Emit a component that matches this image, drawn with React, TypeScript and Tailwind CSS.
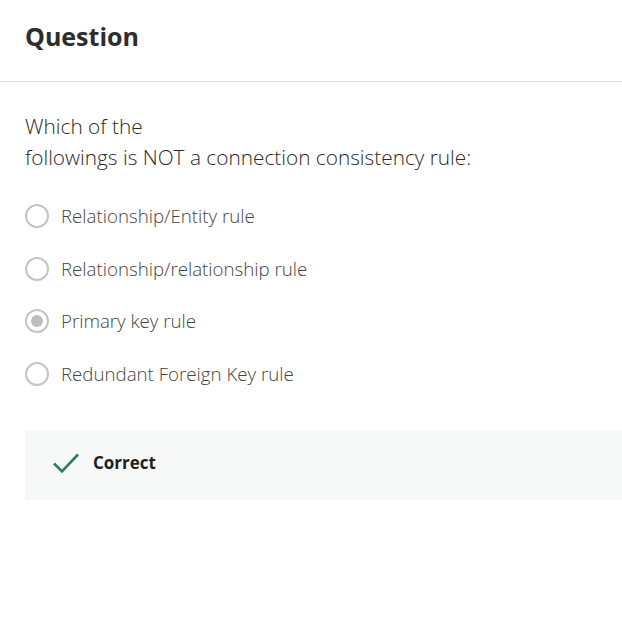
const options = [
	'Relationship/Entity rule',
	'Relationship/relationship rule',
	'Primary key rule',
	'Redundant Foreign Key rule',
];

function Radio({ checked }: { checked?: boolean }) {
	return (
		<span className="flex h-[24px] w-[24px] shrink-0 items-center justify-center rounded-full border-2 border-[#c4c4c4] bg-white">
			{checked && <span className="h-[12px] w-[12px] rounded-full bg-[#bdbdbd]" />}
		</span>
	);
}

export default function App() {
	return (
		<div className="min-h-[634px] w-[622px] overflow-hidden bg-white font-['Open_Sans',sans-serif] text-[#333]">
			<div className="flex h-[82px] items-center border-b border-[#dedede] px-[25px] pb-[8px]">
				<h1 className="text-[25px] font-bold text-[#2d2d2d]">Question</h1>
			</div>

			<div className="pl-[25px] pt-[29px]">
				<p className="text-[20.8px] font-light leading-[31px] text-[#2a2a2a]">
					Which of the
					<br />
					followings is NOT a connection consistency rule:
				</p>

				<div className="mt-[17px] flex flex-col">
					{options.map((opt, i) => (
						<label key={opt} className="flex h-[52.5px] items-center gap-[12px]">
							<Radio checked={i === 2} />
							<span className="text-[18.7px] font-light text-[#444]">{opt}</span>
						</label>
					))}
				</div>

				<div className="mt-[31px] flex h-[69px] items-center gap-[13px] bg-[#f6f9f8] pb-[5px] pl-[27px]">
					<svg width="28" height="22" viewBox="0 0 28 22" fill="none">
						<path d="M2 11.5 L10 19.5 L26 2.5" stroke="#2e7d5b" strokeWidth="2.6" />
					</svg>
					<span className="text-[17px] font-bold text-[#1f1f1f]">Correct</span>
				</div>
			</div>
		</div>
	);
}
